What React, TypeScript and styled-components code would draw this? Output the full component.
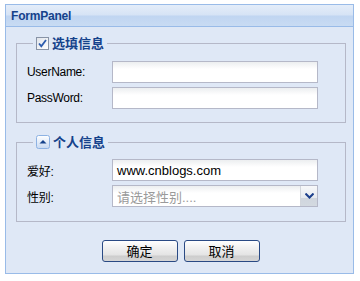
import React from "react";
import styled, { createGlobalStyle } from "styled-components";

const Global = createGlobalStyle`
  html, body { margin: 0; padding: 0; background: #ffffff; }
  body { font-family: "Liberation Sans", "Noto Sans CJK SC", sans-serif; }
  * { box-sizing: border-box; }
`;

const Page = styled.div`
  padding: 4px 0 0 5px;
`;

const Panel = styled.div`
  width: 349px;
  border: 1px solid #99bbe8;
  background: #dfe8f6;
`;

const Header = styled.div`
  height: 22px;
  padding-left: 5px;
  display: flex;
  align-items: center;
  border-bottom: 1px solid #99bbe8;
  background: linear-gradient(to bottom, #e4edf9 0%, #d6e3f5 48%, #c0d5f1 52%, #c8dbf3 100%);
  color: #15428b;
  font: bold 12px "Liberation Sans", sans-serif;
  letter-spacing: -0.2px;
`;

const Body = styled.div`
  padding: 9px 8px 11px 10px;
  display: flex;
  flex-direction: column;
`;

const FieldSet = styled.fieldset<{ $top: number; $bottom: number; $mt?: number }>`
  margin: ${(p) => p.$mt ?? 0}px 0 0 0;
  width: 330px;
  border: 1px solid #b5b8c8;
  padding: ${(p) => p.$top}px 27px ${(p) => p.$bottom}px 10px;
  display: flex;
  flex-direction: column;
  gap: 4px;
  min-width: 0;
`;

const Legend = styled.legend`
  margin-left: 6px;
  padding: 0 3px;
  height: 14px;
  display: flex;
  align-items: center;
  gap: 3px;
  color: #15428b;
  font: bold 13px "Noto Sans CJK SC", "Liberation Sans", sans-serif;
  line-height: 14px;
`;

const Row = styled.div`
  display: flex;
  align-items: center;
  height: 22px;
`;

const Label = styled.label`
  width: 85px;
  flex: none;
  font-size: 12px;
  letter-spacing: -0.3px;
  color: #000;
  font-family: "Liberation Sans", "Noto Sans CJK SC", sans-serif;
`;

const TextBox = styled.div<{ $placeholder?: boolean; $combo?: boolean }>`
  width: 206px;
  height: 22px;
  border: 1px solid #b5b8c8;
  background: linear-gradient(to bottom, #eceef0 0px, #ffffff 7px, #ffffff 100%);
  display: flex;
  align-items: center;
  padding-left: 4px;
  padding-right: ${(p) => (p.$combo ? 0 : 4)}px;
  font-size: 13px;
  color: ${(p) => (p.$placeholder ? "#9a9a9a" : "#000")};
  overflow: hidden;
  white-space: nowrap;
`;

const ComboText = styled.span`
  flex: 1;
`;

const Trigger = styled.div`
  width: 17px;
  height: 20px;
  flex: none;
  border-left: 1px solid #d2d6dc;
  background: linear-gradient(to bottom, #f7f8fa 0%, #e6eaef 60%, #d0d6de 62%, #d3d9e0 100%);
  display: flex;
  align-items: center;
  justify-content: center;
`;

const Buttons = styled.div`
  margin-top: 18px;
  display: flex;
  justify-content: center;
  gap: 6px;
`;

const Button = styled.button`
  width: 76px;
  height: 22px;
  border: 1px solid #2a4a84;
  border-radius: 3px;
  background: linear-gradient(to bottom, #ffffff 0%, #f2f2f2 30%, #e4e4e4 70%, #cdcdcd 75%, #d6d6d6 100%);
  font: 13px "Noto Sans CJK SC", sans-serif;
  color: #000;
  padding: 0;
  line-height: 20px;
`;

const CheckIcon = () => (
  <svg width="13" height="13" viewBox="0 0 13 13">
    <defs>
      <linearGradient id="cbg" x1="0" y1="0" x2="1" y2="1">
        <stop offset="0" stopColor="#dfe3ea" />
        <stop offset="1" stopColor="#ffffff" />
      </linearGradient>
    </defs>
    <rect x="0.5" y="0.5" width="12" height="12" fill="url(#cbg)" stroke="#8893a6" />
    <path d="M3 6.5 L5.3 9.2 L10 3" fill="none" stroke="#2c5cae" strokeWidth="1.8" />
  </svg>
);

const ToggleIcon = () => (
  <svg width="14" height="14" viewBox="0 0 14 14">
    <defs>
      <linearGradient id="tg" x1="0" y1="0" x2="0" y2="1">
        <stop offset="0" stopColor="#ffffff" />
        <stop offset="1" stopColor="#c7d9f2" />
      </linearGradient>
    </defs>
    <rect x="0.5" y="0.5" width="13" height="13" rx="2" fill="url(#tg)" stroke="#8db2e3" />
    <path d="M3.5 8.5 L7 5 L10.5 8.5 Z" fill="#15428b" />
  </svg>
);

const ChevronDown = () => (
  <svg width="9" height="6" viewBox="0 0 9 6">
    <path d="M0.5 0.5 L4.5 4.5 L8.5 0.5" fill="none" stroke="#1c3f8c" strokeWidth="2" />
  </svg>
);

export default function App() {
  return (
    <>
      <Global />
      <Page>
        <Panel>
          <Header>FormPanel</Header>
          <Body>
            <FieldSet $top={11} $bottom={13}>
              <Legend>
                <CheckIcon />
                <span>选填信息</span>
              </Legend>
              <Row>
                <Label>UserName:</Label>
                <TextBox />
              </Row>
              <Row>
                <Label>PassWord:</Label>
                <TextBox />
              </Row>
            </FieldSet>
            <FieldSet $top={10} $bottom={14} $mt={12}>
              <Legend>
                <ToggleIcon />
                <span>个人信息</span>
              </Legend>
              <Row>
                <Label>爱好:</Label>
                <TextBox>www.cnblogs.com</TextBox>
              </Row>
              <Row>
                <Label>性别:</Label>
                <TextBox $placeholder $combo>
                  <ComboText>请选择性别....</ComboText>
                  <Trigger>
                    <ChevronDown />
                  </Trigger>
                </TextBox>
              </Row>
            </FieldSet>
            <Buttons>
              <Button>确定</Button>
              <Button>取消</Button>
            </Buttons>
          </Body>
        </Panel>
      </Page>
    </>
  );
}
